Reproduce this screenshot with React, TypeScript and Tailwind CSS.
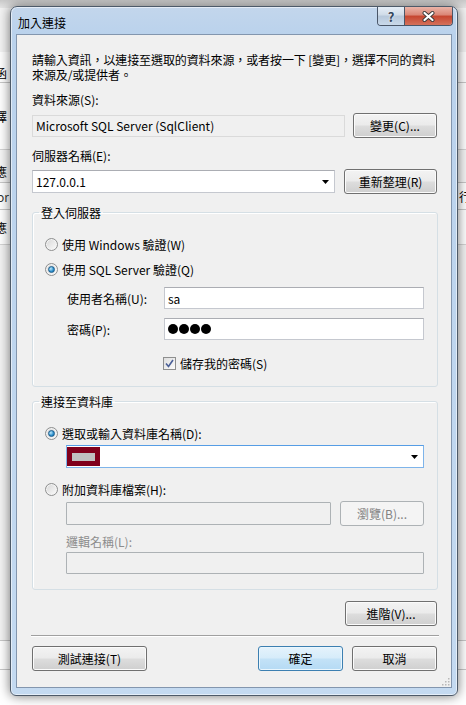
import React from "react";

type BtnProps = {
  children: React.ReactNode;
  className?: string;
  variant?: "normal" | "default" | "disabled";
};

function WinButton({ children, className = "", variant = "normal" }: BtnProps) {
  const look =
    variant === "default"
      ? "border-[#3c7fb1] bg-[linear-gradient(#e5f3fc_0%,#d6ecfa_48%,#c3e2f7_52%,#b5daf4_100%)] shadow-[inset_0_0_0_1px_#eaf6fd] text-black"
      : variant === "disabled"
      ? "border-[#adb2b5] bg-[#f4f4f4] text-[#838383]"
      : "border-[#707070] bg-[linear-gradient(#f3f3f3_0%,#ebebeb_48%,#dddddd_52%,#cfcfcf_100%)] shadow-[inset_0_0_0_1px_#fbfbfb] text-black";
  return (
    <button
      type="button"
      className={`flex h-[25px] shrink-0 items-center justify-center rounded-[3px] border text-[12px] leading-[15px] ${look} ${className}`}
    >
      {children}
    </button>
  );
}

function Radio({ checked = false }: { checked?: boolean }) {
  return (
    <span className="flex h-[13px] w-[13px] shrink-0 items-center justify-center rounded-full border border-[#8e8f8f] bg-[linear-gradient(135deg,#d6d6d6,#fcfcfc)] shadow-[inset_0_0_0_1px_#f4f4f4]">
      {checked && (
        <span className="h-[7px] w-[7px] rounded-full border border-[#1b5c8a] bg-[radial-gradient(circle_at_35%_35%,#bfe9fb,#2a8dcb_60%,#1c6ea8)]" />
      )}
    </span>
  );
}

function Checkbox() {
  return (
    <span className="flex h-[13px] w-[13px] shrink-0 items-center justify-center border border-[#8e8f8f] bg-[linear-gradient(135deg,#dedede,#fbfbfb)]">
      <svg width="9" height="9" viewBox="0 0 9 9">
        <path d="M1 4.5 L3.5 7.5 L8 1" fill="none" stroke="#4a5f97" strokeWidth="1.6" />
      </svg>
    </span>
  );
}

function Arrow() {
  return (
    <svg width="7" height="4" viewBox="0 0 7 4" className="shrink-0">
      <polygon points="0,0 7,0 3.5,4" fill="#000" />
    </svg>
  );
}

export default function App() {
  return (
    <div className="relative h-[705px] w-[466px] overflow-hidden bg-[#f0f0f0] font-['Noto_Sans_CJK_TC',sans-serif] text-[12px] leading-[15px] text-black">
      {/* window behind the dialog */}
      <div className="flex h-full flex-col bg-white">
        <div className="h-[8px] bg-[linear-gradient(#c9c9c9,#e6e6e6)]" />
        <div className="h-[44px] bg-[#f3f3f3]" />
        <div className="flex h-[31px] items-end border-b border-[#c8c8c8] bg-white pb-[2px]">
          <span className="-ml-[5px]">函</span>
        </div>
        <div className="flex h-[67px] items-center border-b border-[#d4d4d4] bg-white">
          <span className="-ml-[5px]">擇</span>
        </div>
        <div className="flex h-[33px] items-end border-b border-[#c8c8c8] bg-[#f6f6f6] pb-[3px]">
          <span className="-ml-[5px]">應</span>
        </div>
        <div className="flex h-[27px] items-center justify-between border-b border-[#c8c8c8] bg-white">
          <span className="-ml-[3px] text-[#333]">or</span>
          <span className="-mr-[5px]">行</span>
        </div>
        <div className="flex h-[35px] items-center border-b border-[#d4d4d4] bg-white">
          <span className="-ml-[5px]">應</span>
        </div>
        <div className="flex-1 bg-[#f3f3f3]" />
        <div className="h-[29px] border-t border-[#c8c8c8] bg-white" />
        <div className="h-[36px] border-t border-[#c8c8c8] bg-white" />
      </div>

      {/* dialog */}
      <div className="absolute left-[10px] top-[6px] flex h-[690px] w-[448px] flex-col rounded-t-[7px] rounded-b-[6px] border border-[#4d5a69] bg-[linear-gradient(180deg,#c3d6ec_0px,#bad2ec_28px,#c4daf1_100%)] px-[5px] pb-[7px] shadow-[0_0_12px_rgba(0,0,0,0.55),inset_0_0_0_1px_rgba(255,255,255,0.55)]">
        {/* title bar */}
        <div className="flex h-[27px] items-start justify-between">
          <span className="mt-[8px] pl-[2px]">加入連接</span>
          <div className="-mr-[1px] flex h-[19px] overflow-hidden rounded-b-[4px] border border-t-0 border-[#4a5668]">
            <div className="flex w-[27px] items-center justify-center border-r border-[#4a5668] bg-[linear-gradient(#e6eef7,#cfdbe8_45%,#b7c8db_50%,#c9d9ea)] text-[13px] font-bold text-[#34465c] [text-shadow:0_0_2px_#fff]">
              ?
            </div>
            <div className="flex w-[47px] items-center justify-center bg-[linear-gradient(#ebb4a8,#da8575_45%,#c6452f_50%,#d4715b)]">
              <svg width="13" height="11" viewBox="0 0 13 11">
                <path d="M2.5 2 L10.5 9 M10.5 2 L2.5 9" stroke="#3a3a3a" strokeWidth="4" strokeLinecap="round" />
                <path d="M2.5 2 L10.5 9 M10.5 2 L2.5 9" stroke="#fff" strokeWidth="2.2" strokeLinecap="round" />
              </svg>
            </div>
          </div>
        </div>

        {/* client area */}
        <div className="relative flex h-[654px] flex-col border border-[#8396ae] bg-[#f0f0f0] pl-[15px] pr-[13px]">
          <p className="mt-[17px] whitespace-nowrap tracking-[-0.1px]">
            請輸入資訊，以連接至選取的資料來源，或者按一下 [變更]，選擇不同的資料
            <br />
            來源及/或提供者。
          </p>

          <span className="mt-[10px]">資料來源(S):</span>
          <div className="mt-[6px] flex items-center">
            <div className="flex h-[22px] w-[313px] items-center border border-[#dadada] bg-[#f0f0f0] pl-[3px]">
              Microsoft SQL Server (SqlClient)
            </div>
            <WinButton className="ml-auto mr-[1px] w-[84px]">變更(C)...</WinButton>
          </div>

          <span className="mt-[10px]">伺服器名稱(E):</span>
          <div className="mt-[6px] flex items-center">
            <div className="flex h-[23px] w-[303px] items-center justify-between border border-[#c5c8cf] border-t-[#abadb3] bg-white pl-[3px] pr-[5px]">
              <span>127.0.0.1</span>
              <Arrow />
            </div>
            <WinButton className="ml-auto mr-[1px] w-[93px]">重新整理(R)</WinButton>
          </div>

          <fieldset className="mt-[11px] rounded-[3px] border border-[#d5dfe5] shadow-[inset_1px_1px_0_#fff]">
            <legend className="ml-[6px] px-[2px]">登入伺服器</legend>
            <div className="flex flex-col pb-[15px] pl-[12px] pr-[13px]">
              <div className="mt-[17px] flex h-[15px] items-center gap-[4px]">
                <Radio />
                <span>使用 Windows 驗證(W)</span>
              </div>
              <div className="mt-[10px] flex h-[15px] items-center gap-[4px]">
                <Radio checked />
                <span>使用 SQL Server 驗證(Q)</span>
              </div>
              <div className="mt-[10px] flex items-center">
                <span className="w-[119px] pl-[22px]">使用者名稱(U):</span>
                <div className="flex h-[22px] flex-1 items-center border border-[#c5c8cf] border-t-[#abadb3] bg-white pl-[3px]">
                  sa
                </div>
              </div>
              <div className="mt-[9px] flex items-center">
                <span className="w-[119px] pl-[22px]">密碼(P):</span>
                <div className="flex h-[22px] flex-1 items-center gap-[1px] border border-[#c5c8cf] border-t-[#abadb3] bg-white pl-[3px]">
                  <span className="h-[10px] w-[10px] rounded-full bg-black" />
                  <span className="h-[10px] w-[10px] rounded-full bg-black" />
                  <span className="h-[10px] w-[10px] rounded-full bg-black" />
                  <span className="h-[10px] w-[10px] rounded-full bg-black" />
                </div>
              </div>
              <div className="mt-[16px] flex h-[15px] items-center gap-[4px] pl-[118px]">
                <Checkbox />
                <span>儲存我的密碼(S)</span>
              </div>
            </div>
          </fieldset>

          <fieldset className="mt-[7px] rounded-[3px] border border-[#d5dfe5] shadow-[inset_1px_1px_0_#fff]">
            <legend className="ml-[6px] px-[2px]">連接至資料庫</legend>
            <div className="flex flex-col pb-[15px] pl-[12px] pr-[13px]">
              <div className="mt-[17px] flex h-[15px] items-center gap-[4px]">
                <Radio checked />
                <span>選取或輸入資料庫名稱(D):</span>
              </div>
              <div className="ml-[21px] mt-[4px] flex h-[23px] items-center justify-between border border-[#7eb4ea] border-t-[#569de5] bg-white pr-[5px]">
                <div className="flex h-[19px] w-[33px] items-center justify-center bg-[#80001c]">
                  <div className="h-[8px] w-[23px] bg-[#c0c0c0]" />
                </div>
                <Arrow />
              </div>
              <div className="mt-[14px] flex h-[15px] items-center gap-[4px]">
                <Radio />
                <span>附加資料庫檔案(H):</span>
              </div>
              <div className="ml-[21px] mt-[4px] flex items-center">
                <div className="h-[23px] w-[265px] rounded-[1px] border border-[#adb2b5] bg-[#f0f0f0]" />
                <WinButton variant="disabled" className="ml-auto w-[84px]">
                  瀏覽(B)...
                </WinButton>
              </div>
              <span className="ml-[21px] mt-[8px] text-[#8d8d8d]">邏輯名稱(L):</span>
              <div className="ml-[21px] mt-[3px] h-[22px] rounded-[1px] border border-[#adb2b5] bg-[#f0f0f0]" />
            </div>
          </fieldset>

          <WinButton className="mr-[1px] mt-[11px] w-[92px] self-end">進階(V)...</WinButton>

          <div className="-mx-[1px] mt-[9px] h-[2px] border-t border-b border-t-[#a0a0a0] border-b-white" />

          <div className="mt-[9px] flex items-center">
            <WinButton className="w-[115px]">測試連接(T)</WinButton>
            <WinButton variant="default" className="ml-auto w-[85px]">
              確定
            </WinButton>
            <WinButton className="ml-[9px] mr-[1px] w-[85px]">取消</WinButton>
          </div>

          <svg width="8" height="8" viewBox="0 0 8 8" className="absolute bottom-[1px] right-[1px]">
            <rect x="6" y="0" width="1.5" height="1.5" fill="#b8b8b8" />
            <rect x="3" y="3" width="1.5" height="1.5" fill="#b8b8b8" />
            <rect x="6" y="3" width="1.5" height="1.5" fill="#b8b8b8" />
            <rect x="0" y="6" width="1.5" height="1.5" fill="#b8b8b8" />
            <rect x="3" y="6" width="1.5" height="1.5" fill="#b8b8b8" />
            <rect x="6" y="6" width="1.5" height="1.5" fill="#b8b8b8" />
          </svg>
        </div>
      </div>
    </div>
  );
}
